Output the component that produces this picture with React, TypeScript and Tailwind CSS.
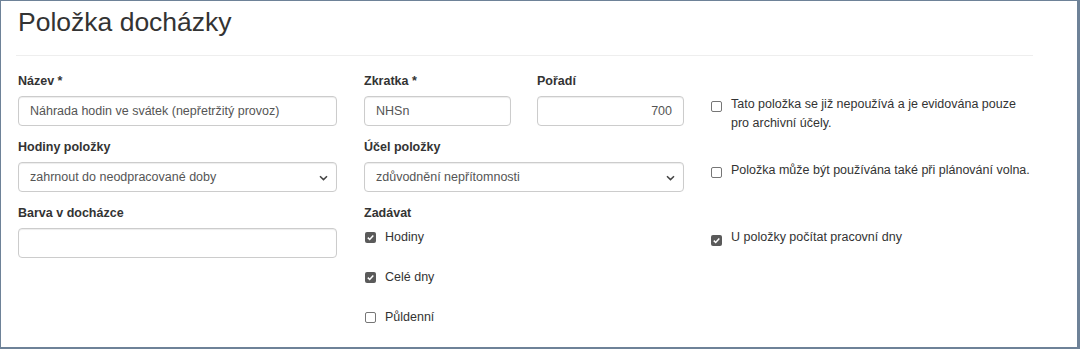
import React from "react";

const font = { fontFamily: '"Liberation Sans", Arial, sans-serif' };

function Chevron() {
  return (
    <svg width="9" height="6" viewBox="0 0 9 6" className="absolute right-[8px] top-[12px]">
      <path d="M1 1.2 L4.5 4.6 L8 1.2" fill="none" stroke="#444" strokeWidth="1.5" />
    </svg>
  );
}

function Box({ checked }: { checked?: boolean }) {
  if (checked) {
    return (
      <span className="inline-flex w-[11px] h-[11px] rounded-[2px] bg-[#5a5a5a] items-center justify-center shrink-0">
        <svg width="9" height="9" viewBox="0 0 9 9">
          <path d="M1.8 4.6 L3.7 6.5 L7.3 2.4" fill="none" stroke="#fff" strokeWidth="1.5" />
        </svg>
      </span>
    );
  }
  return <span className="inline-block w-[11px] h-[11px] rounded-[2px] border border-[#767676] bg-white shrink-0" />;
}

function Label({ children }: { children: React.ReactNode }) {
  return <div className="h-[20px] leading-[20px] text-[12.5px] font-bold text-[#333] mb-[5px]">{children}</div>;
}

const inputCls =
  "h-[30px] rounded-[4px] border border-[#ccc] bg-white shadow-[inset_0_1px_1px_rgba(0,0,0,0.075)] text-[12.5px] text-[#555] flex items-center px-[11px] relative";

export default function App() {
  return (
    <div style={font} className="w-[1080px] h-[349px] bg-white border-l border-t border-r-[3px] border-b-[2px] border-[#6e8298] overflow-hidden">
      <div className="pl-[15px] pr-[44px]">
        <h1 className="text-[26.5px] leading-[30px] text-[#333] pt-[6px] pl-[2px] h-[50px] font-normal">Položka docházky</h1>
        <div className="h-[1px] bg-[#eee] mt-[4px]" />
        <div className="flex pt-[15px] pl-[2px]">
          {/* column 1 */}
          <div className="w-[319px] mr-[27px]">
            <Label>Název *</Label>
            <div className={inputCls}>Náhrada hodin ve svátek (nepřetržitý provoz)</div>
            <div className="h-[11px]" />
            <Label>Hodiny položky</Label>
            <div className={inputCls}>
              zahrnout do neodpracované doby
              <Chevron />
            </div>
            <div className="h-[11px]" />
            <Label>Barva v docházce</Label>
            <div className={inputCls} />
          </div>
          {/* column 2 */}
          <div className="w-[320px] mr-[27px]">
            <div className="flex gap-[26px]">
              <div className="w-[147px]">
                <Label>Zkratka *</Label>
                <div className={inputCls}>NHSn</div>
              </div>
              <div className="w-[147px]">
                <Label>Pořadí</Label>
                <div className={inputCls + " justify-end"}>700</div>
              </div>
            </div>
            <div className="h-[11px]" />
            <Label>Účel položky</Label>
            <div className={inputCls}>
              zdůvodnění nepřítomnosti
              <Chevron />
            </div>
            <div className="h-[11px]" />
            <div className="h-[20px] leading-[20px] text-[12.5px] font-bold text-[#333]">Zadávat</div>
            <div className="flex flex-col text-[12.5px] text-[#333]">
              <div className="flex items-center gap-[9px] h-[20px] pl-[1px] mt-[4px]">
                <Box checked />
                <span>Hodiny</span>
              </div>
              <div className="flex items-center gap-[9px] h-[20px] pl-[1px] mt-[20px]">
                <Box checked />
                <span>Celé dny</span>
              </div>
              <div className="flex items-center gap-[9px] h-[20px] pl-[1px] mt-[20px]">
                <Box />
                <span>Půldenní</span>
              </div>
            </div>
          </div>
          {/* column 3 */}
          <div className="flex-1 text-[12.5px] text-[#333] leading-[19px] pt-[24px]">
            <div className="flex items-start gap-[9px]">
              <span className="mt-[4px]"><Box /></span>
              <span className="w-[295px]">Tato položka se již nepoužívá a je evidována pouze pro archivní účely.</span>
            </div>
            <div className="flex items-start gap-[9px] mt-[28px]">
              <span className="mt-[4px]"><Box /></span>
              <span className="whitespace-nowrap">Položka může být používána také při plánování volna.</span>
            </div>
            <div className="flex items-start gap-[9px] mt-[44px]">
              <span className="mt-[4px]"><Box checked /></span>
              <span>U položky počítat pracovní dny</span>
            </div>
          </div>
        </div>
      </div>
    </div>
  );
}
